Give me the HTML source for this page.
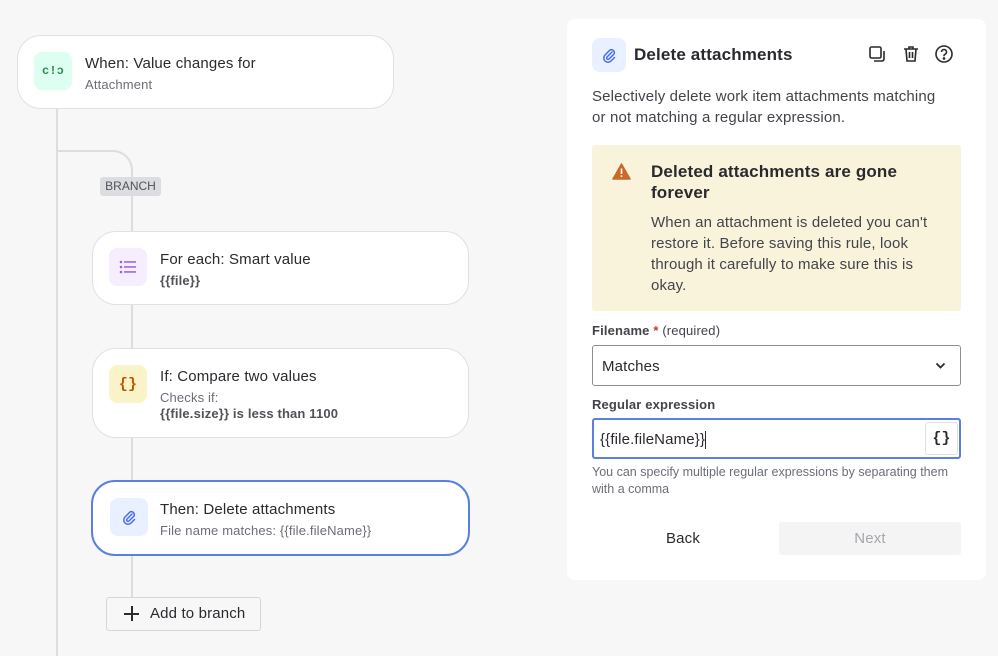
<!DOCTYPE html>
<html><head><meta charset="utf-8"><style>
*{box-sizing:border-box;margin:0;padding:0}
body{width:998px;height:656px;background:#f7f7f7;font-family:"Liberation Sans",sans-serif;color:#292a2e;position:relative;overflow:hidden;letter-spacing:0.15px}
.a{position:absolute}
.card{position:absolute;background:#fff;border:1px solid #dfe1e5;border-radius:24px}
.ic{position:absolute;width:38px;height:38px;border-radius:8px;display:flex;align-items:center;justify-content:center}
.t{position:absolute;font-size:15px;white-space:nowrap}
.s{position:absolute;font-size:13px;color:#6b6e76;white-space:nowrap}
.line{position:absolute;background:#dcdde0}
</style></head><body>
<div class="line" style="left:56px;top:108px;width:2px;height:548px"></div>
<div class="a" style="left:57px;top:150px;width:76px;height:40px;border-top:2px solid #dcdde0;border-right:2px solid #dcdde0;border-top-right-radius:20px"></div>
<div class="line" style="left:131px;top:190px;width:2px;height:410px"></div>
<div class="a" style="left:100px;top:177px;width:61px;height:19px;background:#dcdde0;border-radius:3px;font-size:12px;color:#505258;text-align:center;line-height:19px;letter-spacing:0">BRANCH</div>

<div class="card" style="left:17px;top:35px;width:377px;height:74px">
<div class="ic" style="left:16px;top:16px;background:#dcfff1;color:#2e8a54;font-size:12px;font-weight:bold;font-family:'Liberation Mono',monospace">c!ɔ</div>
<div class="t" style="left:67px;top:19px">When: Value changes for</div>
<div class="s" style="left:67px;top:41px">Attachment</div></div>

<div class="card" style="left:92px;top:231px;width:377px;height:74px">
<div class="ic" style="left:16px;top:16px;background:#f6edff"><svg width="18" height="16" viewBox="0 0 18 16"><g fill="#9f5ee0"><circle cx="2" cy="3" r="1.3"/><circle cx="2" cy="8" r="1.3"/><circle cx="2" cy="13" r="1.3"/><rect x="5" y="2.2" width="12" height="1.5"/><rect x="5" y="7.2" width="12" height="1.5"/><rect x="5" y="12.2" width="12" height="1.5"/></g></svg></div>
<div class="t" style="left:67px;top:19px">For each: Smart value</div>
<div class="s" style="left:67px;top:41px;font-weight:bold;color:#505258">{{file}}</div></div>

<div class="card" style="left:92px;top:348px;width:377px;height:90px">
<div class="ic" style="left:16px;top:16px;background:#fbf3c8;color:#c25100;font-family:'Liberation Mono',monospace;font-size:15px;font-weight:bold">{}</div>
<div class="t" style="left:67px;top:19px">If: Compare two values</div>
<div class="s" style="left:67px;top:41px">Checks if:</div>
<div class="s" style="left:67px;top:57px;font-weight:bold;color:#505258">{{file.size}} is less than 1100</div></div>

<div class="card" style="left:91px;top:480px;width:379px;height:76px;border:2px solid #5a7fe0">
<div class="ic" style="left:17px;top:16px;background:#e9f0ff"><svg width="16" height="16" viewBox="0 0 16 16"><path d="M11 5 L6 10 a1.4 1.4 0 0 0 2 2 L13 7 a3 3 0 0 0 -4 -4 L4 8 a4 4 0 0 0 6 6 L13.5 10.5" fill="none" stroke="#4a6fdc" stroke-width="1.5" stroke-linecap="round"/></svg></div>
<div class="t" style="left:67px;top:19px">Then: Delete attachments</div>
<div class="s" style="left:67px;top:41px">File name matches: {{file.fileName}}</div></div>

<div class="a" style="left:106px;top:597px;width:155px;height:34px;background:#f7f7f7;border:1px solid #d5d6d9;border-radius:3px;font-size:15px;line-height:32px;padding-left:43px">Add to branch</div>
<div class="a" style="left:124px;top:613px;width:15px;height:1.6px;background:#292a2e"></div>
<div class="a" style="left:131px;top:606px;width:1.6px;height:15px;background:#292a2e"></div>

<div class="a" style="left:567px;top:19px;width:419px;height:561px;background:#fff;border-radius:8px"></div>
<div class="ic" style="left:592px;top:38px;width:34px;height:34px;background:#e9f0ff"><svg width="16" height="16" viewBox="0 0 16 16"><path d="M11 5 L6 10 a1.4 1.4 0 0 0 2 2 L13 7 a3 3 0 0 0 -4 -4 L4 8 a4 4 0 0 0 6 6 L13.5 10.5" fill="none" stroke="#4a6fdc" stroke-width="1.5" stroke-linecap="round"/></svg></div>
<div class="t" style="left:634px;top:45px;font-size:17px;font-weight:bold">Delete attachments</div>
<svg class="a" style="left:867px;top:44px" width="20" height="20" viewBox="0 0 20 20" fill="none" stroke="#292a2e" stroke-width="1.6"><rect x="3" y="3" width="11" height="11" rx="1.5"/><path d="M17 7v8a2 2 0 0 1-2 2H7"/></svg>
<svg class="a" style="left:901px;top:44px" width="20" height="20" viewBox="0 0 20 20" fill="none" stroke="#292a2e" stroke-width="1.6"><path d="M3 5h14M8 5V3h4v2M5 5l1 12h8l1-12M8.5 8v6M11.5 8v6"/></svg>
<svg class="a" style="left:934px;top:44px" width="20" height="20" viewBox="0 0 20 20" fill="none" stroke="#292a2e" stroke-width="1.6"><circle cx="10" cy="10" r="8"/><path d="M7.5 8a2.5 2.5 0 1 1 3.5 2.3c-.7.3-1 .8-1 1.5v.5"/><circle cx="10" cy="14.5" r=".6" fill="#292a2e"/></svg>
<div class="a" style="left:592px;top:86px;width:355px;font-size:15px;line-height:21px;color:#42444a">Selectively delete work item attachments matching or not matching a regular expression.</div>
<div class="a" style="left:592px;top:145px;width:369px;height:166px;background:#faf3dc;border-radius:3px"></div>
<svg class="a" style="left:612px;top:163px" width="19" height="17" viewBox="0 0 19 17"><path d="M9.5 1 L18 16 H1 Z" fill="#c76a2a" stroke="#c76a2a" stroke-linejoin="round" stroke-width="1.5"/><rect x="8.7" y="5.5" width="1.6" height="5.5" fill="#fff"/><rect x="8.7" y="12.3" width="1.6" height="1.6" fill="#fff"/></svg>
<div class="a" style="left:651px;top:161px;width:290px;font-size:17px;font-weight:bold;line-height:21px">Deleted attachments are gone forever</div>
<div class="a" style="left:651px;top:212px;width:290px;font-size:15px;line-height:21px;color:#42444a">When an attachment is deleted you can't restore it. Before saving this rule, look through it carefully to make sure this is okay.</div>
<div class="a" style="left:592px;top:323px;font-size:13px;font-weight:bold;color:#42444a">Filename <span style="color:#c9372c">*</span> <span style="font-weight:normal">(required)</span></div>
<div class="a" style="left:592px;top:345px;width:369px;height:41px;border:1px solid #8c8f97;border-radius:3px;font-size:15px;line-height:41px;padding-left:9px">Matches</div>
<svg class="a" style="left:935px;top:362px" width="11" height="8" viewBox="0 0 11 8"><path d="M1.5 1.5 L5.5 5.5 L9.5 1.5" fill="none" stroke="#292a2e" stroke-width="1.8"/></svg>
<div class="a" style="left:592px;top:397px;font-size:13px;font-weight:bold;color:#42444a">Regular expression</div>
<div class="a" style="left:592px;top:418px;width:369px;height:41px;border:2px solid #5a7fe0;border-radius:3px;font-size:15px;line-height:39px;padding-left:6px">{{file.fileName}}<span style="display:inline-block;width:1px;height:18px;background:#292a2e;vertical-align:middle"></span></div>
<div class="a" style="left:925px;top:422px;width:33px;height:33px;border:1px solid #e0e1e4;border-radius:3px;background:#fff;font-family:'Liberation Mono',monospace;font-weight:bold;font-size:15px;text-align:center;line-height:31px">{}</div>
<div class="a" style="left:592px;top:464px;width:369px;font-size:12.5px;line-height:17px;color:#6b6e76;letter-spacing:0">You can specify multiple regular expressions by separating them with a comma</div>
<div class="a" style="left:592px;top:522px;width:182px;height:33px;font-size:15px;line-height:33px;text-align:center;color:#292a2e">Back</div>
<div class="a" style="left:779px;top:522px;width:182px;height:33px;background:#f4f4f5;border-radius:3px;font-size:15px;line-height:33px;text-align:center;color:#a5a7ad">Next</div>
</body></html>
